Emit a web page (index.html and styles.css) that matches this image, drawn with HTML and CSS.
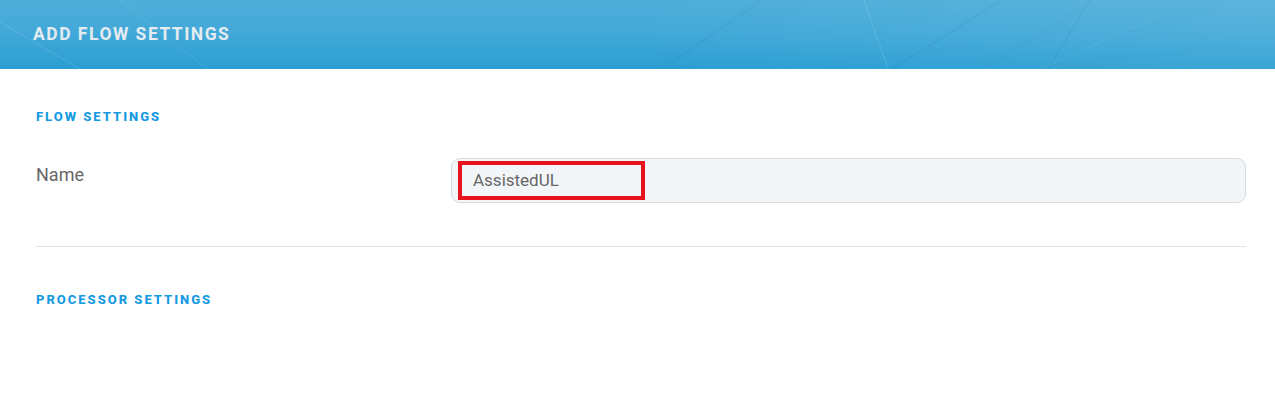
FILE: index.html
```html
<!DOCTYPE html>
<html lang="en">

<head>
    <meta charset="UTF-8">
    <meta name="viewport" content="width=device-width, initial-scale=1.0">
    <title>Add Flow Settings</title>
    <link rel="stylesheet" href="styles.css">
</head>

<body>
    <div class="header">
        <svg class="header-lines" width="1275" height="69" viewBox="0 0 1275 69">
            <line x1="0" y1="22" x2="80" y2="69" stroke="rgba(255,255,255,0.14)" stroke-width="1" />
            <line x1="120" y1="0" x2="207" y2="69" stroke="rgba(255,255,255,0.1)" stroke-width="1" />
            <line x1="762" y1="0" x2="662" y2="69" stroke="rgba(0,70,120,0.04)" stroke-width="3" />
            <line x1="864" y1="0" x2="888" y2="69" stroke="rgba(255,255,255,0.14)" stroke-width="1" />
            <line x1="1002" y1="0" x2="892" y2="69" stroke="rgba(0,70,120,0.06)" stroke-width="2" />
            <line x1="1090" y1="0" x2="1048" y2="69" stroke="rgba(0,70,120,0.1)" stroke-width="1" />
            <line x1="1082" y1="8" x2="982" y2="69" stroke="rgba(0,70,120,0.05)" stroke-width="1" />
            <line x1="1160" y1="15" x2="1040" y2="69" stroke="rgba(255,255,255,0.08)" stroke-width="1" />
        </svg>
        <h1 class="header-title">ADD FLOW SETTINGS</h1>
    </div>

    <div class="content">
        <h2 class="section-title">FLOW SETTINGS</h2>
        <div class="field-row">
            <label class="field-label">Name</label>
            <div class="field-input">
                <span class="highlight">AssistedUL</span>
            </div>
        </div>
        <hr class="divider">
        <h2 class="section-title">PROCESSOR SETTINGS</h2>
    </div>
</body>

</html>
```

FILE: styles.css
```css
* {
    margin: 0;
    padding: 0;
    box-sizing: border-box;
}

body {
    font-family: Roboto, "Liberation Sans", sans-serif;
    background: #fff;
    width: 1275px;
    height: 411px;
    overflow: hidden;
}

.header {
    position: relative;
    height: 69px;
    display: flex;
    align-items: center;
    padding-left: 33px;
    background: linear-gradient(180deg, #4eaed9 0%, #41a8d8 50%, #2a9ed3 100%);
    overflow: hidden;
}

.header::before {
    content: "";
    position: absolute;
    inset: 0;
    background: linear-gradient(90deg, rgba(255, 255, 255, 0) 50%, rgba(255, 255, 255, 0.08) 100%);
}

.header-lines {
    position: absolute;
    left: 0;
    top: 0;
}

.header-title {
    position: relative;
    font-size: 17.5px;
    font-weight: 700;
    color: #e4ecf1;
    letter-spacing: 1.5px;
    margin-top: -1px;
}

.content {
    padding: 40px 29px 0 36px;
}

.section-title {
    font-size: 13px;
    font-weight: 800;
    letter-spacing: 2px;
    color: #1299e2;
    line-height: 15px;
}

.field-row {
    display: flex;
    align-items: flex-start;
    margin-top: 34px;
}

.field-label {
    width: 415px;
    font-size: 18px;
    color: #666;
    line-height: 20px;
    padding-top: 7px;
}

.field-input {
    flex: 1;
    height: 45px;
    border: 1px solid #d6dadd;
    border-radius: 9px;
    background: #f3f6f9;
    padding: 2px 0 0 6px;
}

.highlight {
    display: inline-block;
    width: 187px;
    height: 39px;
    border: 4px solid #e5141f;
    padding: 0 0 0 11px;
    font-size: 17px;
    line-height: 31px;
    color: #666;
}

.divider {
    border: none;
    border-top: 1px solid #dde3e6;
    margin: 43px 0 45px;
}
```
